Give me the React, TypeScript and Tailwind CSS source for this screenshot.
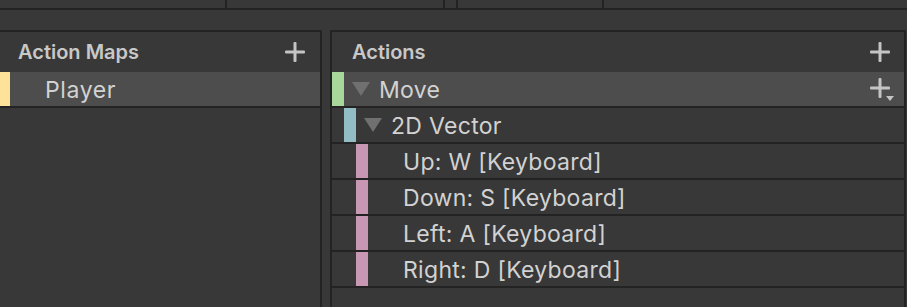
import React from 'react';

// 行の区切り線や枠線の色
const line = 'border-[#232323]';

function Plus({ drop = false }: { drop?: boolean }) {
    return (
        <svg width={drop ? 26 : 20} height={drop ? 24 : 20} viewBox={drop ? '0 0 26 24' : '0 0 20 20'} className="shrink-0">
            <rect x="8.5" y="0" width="3" height="20" rx="1" fill="#c4c4c4" />
            <rect x="0" y="8.5" width="20" height="3" rx="1" fill="#c4c4c4" />
            {drop && <path d="M16 18 L24 18 L20 23 Z" fill="#c4c4c4" />}
        </svg>
    );
}

function Triangle() {
    return (
        <svg width="18" height="16" viewBox="0 0 18 16" className="shrink-0">
            <path d="M0 1 L18 1 L9 15 Z" fill="#707070" />
        </svg>
    );
}

type Row = {
    label: string;
    indent: number;
    bar: string;
    fold?: boolean;
    selected?: boolean;
};

const rows: Row[] = [
    { label: 'Move', indent: 0, bar: 'bg-[#a7d79b]', fold: true, selected: true },
    { label: '2D Vector', indent: 1, bar: 'bg-[#93bdc4]', fold: true },
    { label: 'Up: W [Keyboard]', indent: 2, bar: 'bg-[#c897b4]' },
    { label: 'Down: S [Keyboard]', indent: 2, bar: 'bg-[#c897b4]' },
    { label: 'Left: A [Keyboard]', indent: 2, bar: 'bg-[#c897b4]' },
    { label: 'Right: D [Keyboard]', indent: 2, bar: 'bg-[#c897b4]' },
];

export default function App() {
    return (
        <div
            className="w-[907px] h-[307px] overflow-hidden bg-[#383838] flex flex-col text-[#d2d2d2]"
            style={{ fontFamily: 'Inter, "Noto Sans", sans-serif' }}
        >
            {/* 上部のタブ列（切れている） */}
            <div className={`h-[10px] shrink-0 flex border-b-2 ${line}`}>
                <div className={`w-[227px] border-r-2 ${line}`} />
                <div className={`w-[218px] border-r-2 ${line}`} />
                <div className={`w-[13px] border-r-2 ${line}`} />
                <div className={`w-[146px] border-r-2 ${line}`} />
                <div className="flex-1" />
            </div>

            <div className="flex flex-1 pt-[20px] gap-[8px] pr-[1px]">
                {/* Action Maps パネル */}
                <div className={`w-[322px] flex flex-col border-t-2 border-r-2 ${line}`}>
                    <div className="h-[40px] flex items-center justify-between pl-[18px] pr-[15px]">
                        <span className="text-[20px] font-semibold text-[#c8c8c8]">Action Maps</span>
                        <Plus />
                    </div>
                    <div className={`h-[36px] flex bg-[#4d4d4d] border-b-2 ${line}`}>
                        <div className="w-[10px] bg-[#fee29a]" />
                        <span className="pl-[35px] pt-[1px] text-[23px] leading-[34px] tracking-[0.6px]">Player</span>
                    </div>
                </div>

                {/* Actions パネル */}
                <div className={`flex-1 flex flex-col border-t-2 border-x-2 ${line}`}>
                    <div className="h-[40px] flex items-center justify-between pl-[20px] pr-[14px]">
                        <span className="text-[20px] font-semibold text-[#c8c8c8]">Actions</span>
                        <Plus />
                    </div>
                    {rows.map((r) => (
                        <div
                            key={r.label}
                            className={`h-[36px] flex items-center border-b-2 ${line} ${r.selected ? 'bg-[#4d4d4d]' : ''} ${
                                r.indent === 1 ? 'pl-[12px]' : r.indent === 2 ? 'pl-[24px]' : ''
                            }`}
                        >
                            <div className={`w-[12px] self-stretch ${r.bar}`} />
                            {r.fold ? (
                                <div className="flex items-center pl-[8px] gap-[9px]">
                                    <Triangle />
                                    <span className="pt-[2px] text-[23px] leading-[34px] tracking-[0.3px]">{r.label}</span>
                                </div>
                            ) : (
                                <span className="pl-[35px] pt-[2px] text-[23px] leading-[34px] tracking-[0.3px]">{r.label}</span>
                            )}
                            {r.selected && (
                                <div className="ml-auto pr-[8px] pt-[2px]">
                                    <Plus drop />
                                </div>
                            )}
                        </div>
                    ))}
                </div>
            </div>
        </div>
    );
}
